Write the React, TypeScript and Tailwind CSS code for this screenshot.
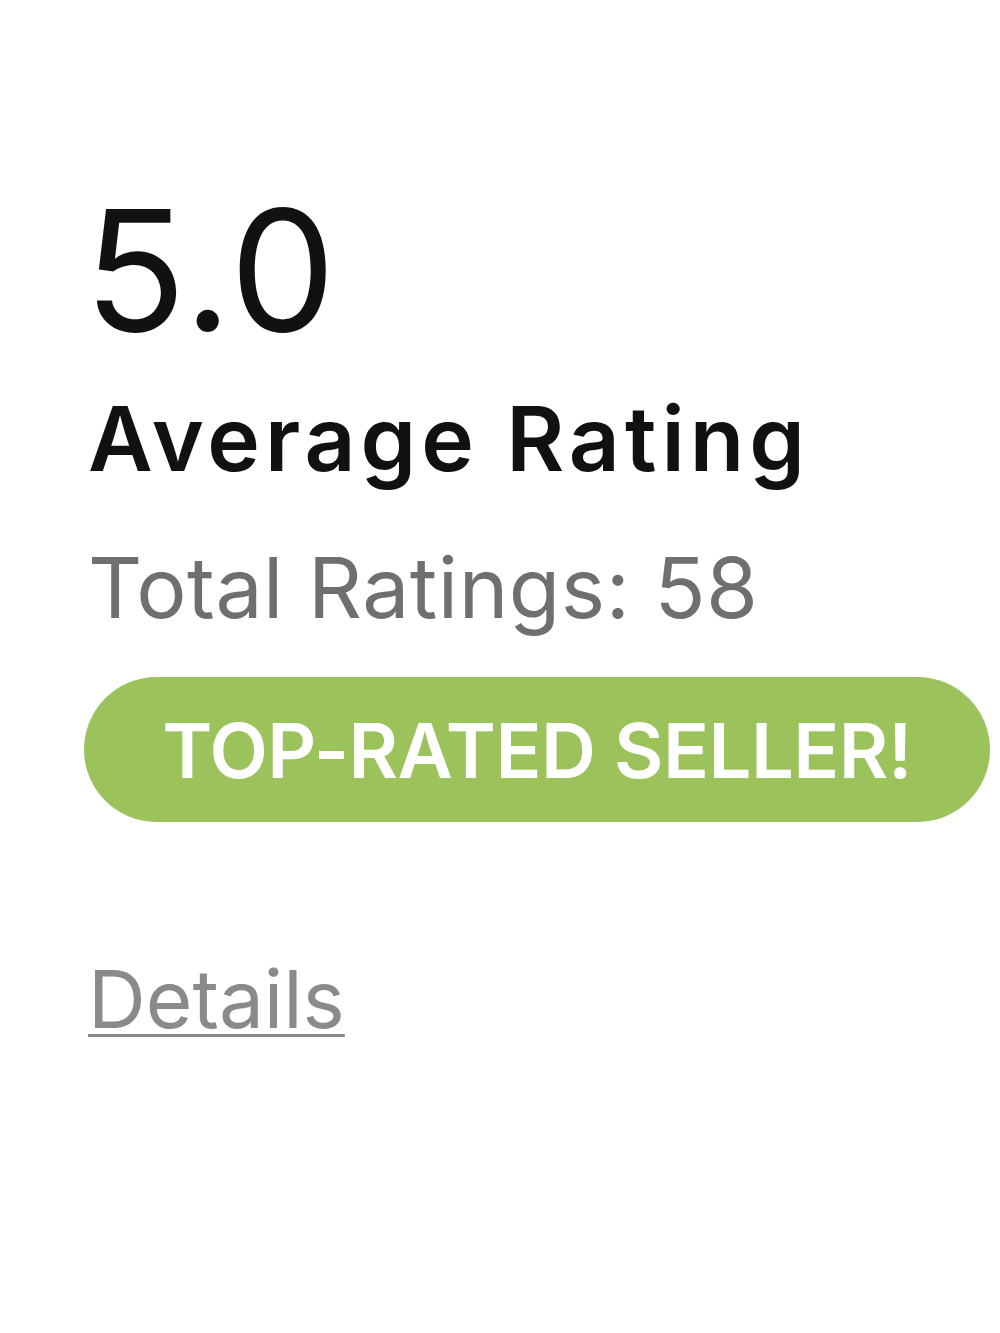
export default function App() {
  return (
    <div className="min-h-[1333px] bg-white font-['Inter',sans-serif] pl-[88px] pt-[186px]">
      <div className="flex flex-col items-start">
        <div className="-ml-[4px] text-[168px] leading-none text-[#111] tracking-[2px]">5.0</div>
        <div className="mt-[40px] text-[89px] leading-none font-semibold text-[#111] tracking-[5px]">
          Average Rating
        </div>
        <div className="mt-[63px] text-[84px] leading-none text-[#6f6f6f] tracking-[0.5px]">
          Total Ratings: 58
        </div>
        <div className="mt-[47px] -ml-[4px] flex h-[145px] w-[906px] items-center justify-center rounded-full bg-[#9bc25b]">
          <span className="text-[76px] font-semibold text-white tracking-[-0.5px]">TOP-RATED SELLER!</span>
        </div>
        <a className="mt-[137px] text-[80px] leading-none text-[#8a8a8a] underline decoration-[3px] underline-offset-[6px]">
          Details
        </a>
      </div>
    </div>
  );
}
